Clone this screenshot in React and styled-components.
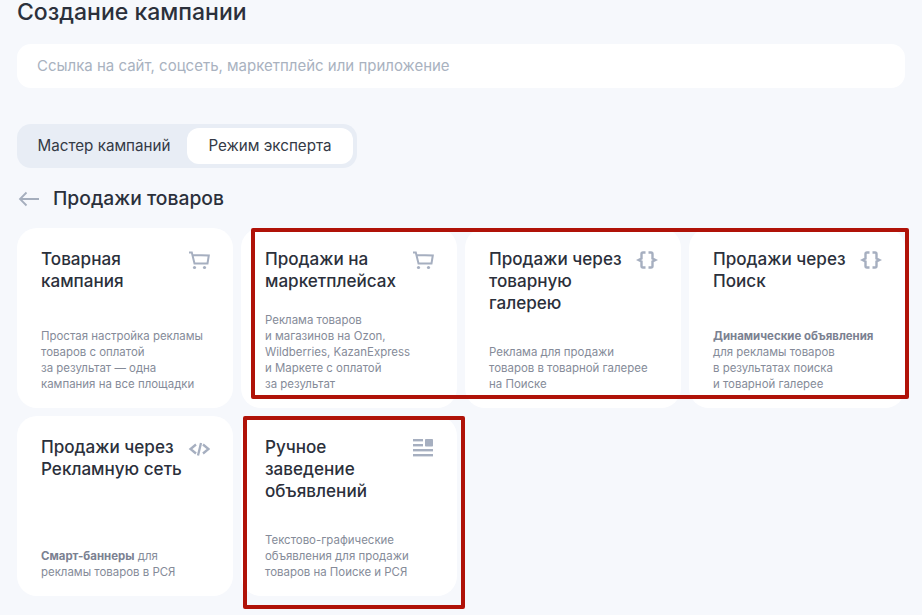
import React from "react";
import styled, { createGlobalStyle } from "styled-components";

const Global = createGlobalStyle`
  html, body { margin: 0; padding: 0; background: #f6f8fc; }
  body { font-family: "Inter", "Noto Sans", sans-serif; width: 922px; height: 615px; overflow: hidden; }
`;

const Page = styled.main`
  position: relative;
  box-sizing: border-box;
  width: 922px;
  height: 615px;
  padding: 0 17px;
  overflow: hidden;
`;
const Title = styled.h1`
  margin: 0;
  height: 44px;
  font-size: 23px;
  line-height: 24px;
  font-weight: 500;
  color: #2b303b;
`;
const LinkInput = styled.div`
  height: 44px;
  box-sizing: border-box;
  padding: 0 20px 2px;
  display: flex;
  align-items: center;
  background: #fff;
  border-radius: 14px;
  font-size: 15px;
  color: #a9b2bf;
`;
const Segmented = styled.div`
  margin-top: 36px;
  width: fit-content;
  height: 44px;
  box-sizing: border-box;
  padding: 4px;
  display: flex;
  background: #e8edf5;
  border-radius: 14px;
`;
const Segment = styled.div`
  width: ${(p) => p.$w}px;
  box-sizing: border-box;
  padding-bottom: 2px;
  display: flex;
  align-items: center;
  justify-content: center;
  border-radius: 12px;
  font-size: 15.2px;
  color: #343a46;
  background: ${(p) => (p.$active ? "#fff" : "transparent")};
`;
const SectionHead = styled.div`
  margin-top: 14px;
  height: 32px;
  display: flex;
  align-items: center;
  gap: 13px;
`;
const BackArrow = styled.svg`
  flex: none;
  width: 22px;
  height: 16px;
  margin: 2px 0 0 1px;
  color: #a5aebd;
`;
const SectionTitle = styled.h2`
  margin: 0;
  font-size: 19.3px;
  font-weight: 500;
  color: #2b303b;
`;
const Grid = styled.div`
  margin-top: 14px;
  display: grid;
  grid-template-columns: repeat(4, 216px);
  grid-auto-rows: 180px;
  gap: 8px;
`;
const Card = styled.article`
  position: relative;
  box-sizing: border-box;
  padding: 20px 24px 16px;
  background: #fff;
  border-radius: 20px;
  display: flex;
  flex-direction: column;
  justify-content: space-between;
`;
const CardTop = styled.div`
  display: flex;
  justify-content: space-between;
  align-items: flex-start;
`;
const CardTitle = styled.h3`
  margin: 0;
  font-size: 17.1px;
  line-height: 22px;
  font-weight: 500;
  color: #2b303b;
  white-space: pre-line;
`;
const CardIcon = styled.svg`
  flex: none;
  width: 22px;
  height: 22px;
  margin-right: -1px;
  color: #a6afc0;
`;
const CardText = styled.p`
  margin: 0;
  font-size: 11.45px;
  line-height: 16px;
  color: #858b99;
  white-space: pre-line;
  b { font-weight: 700; color: #7b8191; }
`;
const Highlight = styled.div`
  position: absolute;
  box-sizing: border-box;
  border: 4px solid #b01208;
  border-radius: 2px;
  left: ${(p) => p.$l}px;
  top: ${(p) => p.$t}px;
  width: ${(p) => p.$w}px;
  height: ${(p) => p.$h}px;
`;

const Cart = () => (
  <CardIcon viewBox="0 0 22 22" fill="none" stroke="currentColor" strokeWidth="2">
    <path d="M1 4.500h2.800L6.500 15.500H19.500L20.800 7.500 4.800 7" />
    <circle cx="6.500" cy="19.500" r="1.600" fill="currentColor" stroke="none" />
    <circle cx="16.500" cy="19.500" r="1.600" fill="currentColor" stroke="none" />
  </CardIcon>
);
const Braces = () => (
  <CardIcon viewBox="0 0 22 22" fill="none" stroke="currentColor" strokeWidth="2.400">
    <path d="M9.500 4.500H7Q5.500 4.500 5.500 6V10.500L2.500 12 5.500 13.500V18Q5.500 19.500 7 19.500H9.500" />
    <path d="M12.500 4.500H15Q16.500 4.500 16.500 6V10.500L19.500 12 16.500 13.500V18Q16.500 19.500 15 19.500H12.500" />
  </CardIcon>
);
const Code = () => (
  <CardIcon viewBox="0 0 22 22" fill="none" stroke="currentColor" strokeWidth="2.300">
    <path d="M8 8.500 2.500 13 8 17.500M15 8.500 20.500 13 15 17.500M13 7 10 19.500" />
  </CardIcon>
);
const Ad = () => (
  <CardIcon viewBox="0 0 22 22" fill="currentColor">
    <rect x="1" y="3" width="10" height="2.400" />
    <rect x="1" y="8" width="10" height="2.400" />
    <rect x="13" y="3" width="8" height="7.500" rx="0.800" />
    <rect x="1" y="13" width="20" height="2.400" />
    <rect x="1" y="18" width="20" height="2.400" />
  </CardIcon>
);

const cards = [
  { title: "Товарная\nкампания", Icon: Cart, text: "Простая настройка рекламы\nтоваров с оплатой\nза результат — одна\nкампания на все площадки" },
  { title: "Продажи на\nмаркетплейсах", Icon: Cart, text: "Реклама товаров\nи магазинов на Ozon,\nWildberries, KazanExpress\nи Маркете с оплатой\nза результат" },
  { title: "Продажи через\nтоварную\nгалерею", Icon: Braces, text: "Реклама для продажи\nтоваров в товарной галерее\nна Поиске" },
  { title: "Продажи через\nПоиск", Icon: Braces, strong: "Динамические объявления", text: "\nдля рекламы товаров\nв результатах поиска\nи товарной галерее" },
  { title: "Продажи через\nРекламную сеть", Icon: Code, strong: "Смарт-баннеры", text: " для\nрекламы товаров в РСЯ" },
  { title: "Ручное\nзаведение\nобъявлений", Icon: Ad, text: "Текстово-графические\nобъявления для продажи\nтоваров на Поиске и РСЯ" },
];

export default function App() {
  return (
    <Page>
      <Global />
      <Title>Создание кампании</Title>
      <LinkInput>Ссылка на сайт, соцсеть, маркетплейс или приложение</LinkInput>
      <Segmented>
        <Segment $w={166}>Мастер кампаний</Segment>
        <Segment $w={166} $active>Режим эксперта</Segment>
      </Segmented>
      <SectionHead>
        <BackArrow viewBox="0 0 22 16" fill="none" stroke="currentColor" strokeWidth="1.800">
          <path d="M21 8H2M8.500 1.500 2 8l6.500 6.500" />
        </BackArrow>
        <SectionTitle>Продажи товаров</SectionTitle>
      </SectionHead>
      <Grid>
        {cards.map((c) => (
          <Card key={c.title}>
            <CardTop>
              <CardTitle>{c.title}</CardTitle>
              <c.Icon />
            </CardTop>
            <CardText>
              {c.strong && <b>{c.strong}</b>}
              {c.text}
            </CardText>
          </Card>
        ))}
      </Grid>
      <Highlight $l={251} $t={228} $w={658} $h={171} />
      <Highlight $l={243} $t={416} $w={222} $h={193} />
    </Page>
  );
}
